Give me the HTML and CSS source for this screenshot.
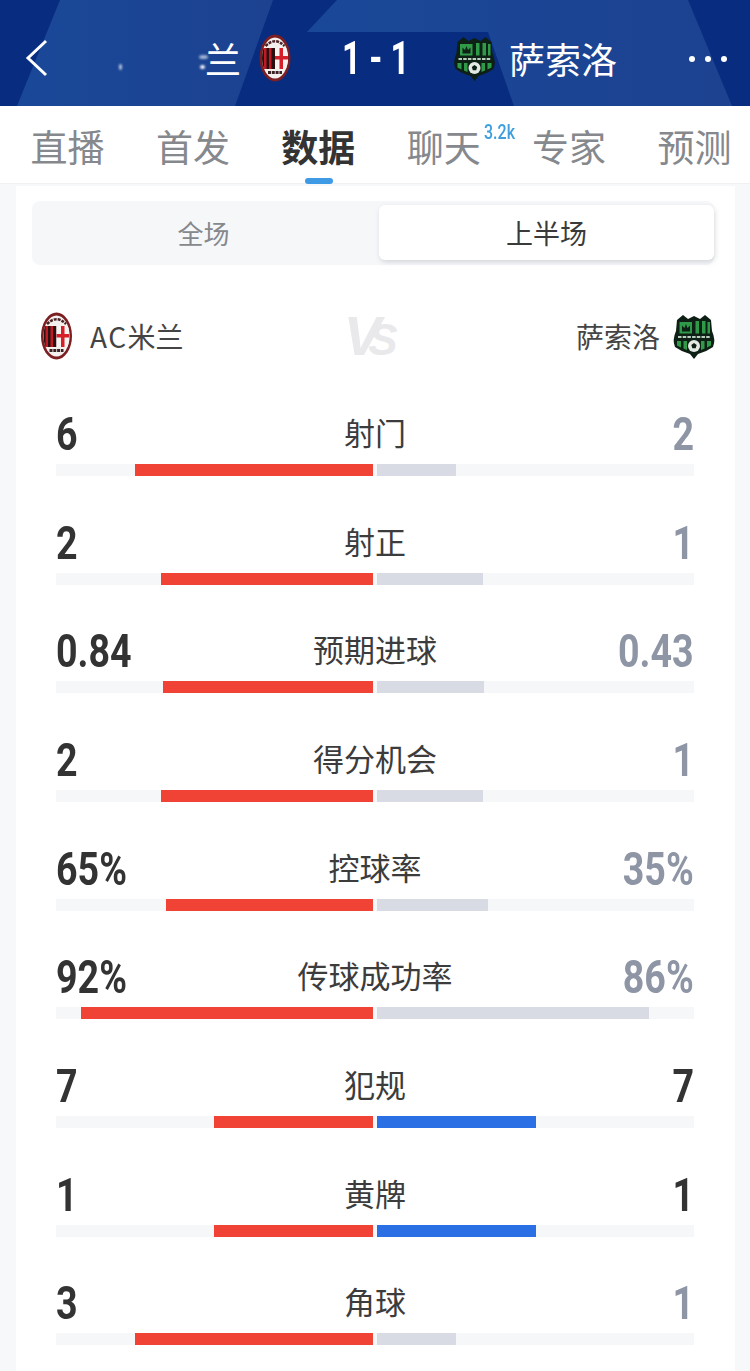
FILE: index.html
```html
<!DOCTYPE html>
<html lang="zh-CN">
<head>
<meta charset="utf-8">
<title>AC米兰 1-1 萨索洛</title>
<link rel="stylesheet" href="styles.css">
</head>
<body>
<svg class="defs" width="0" height="0" aria-hidden="true">
  <defs>
    <clipPath id="milan-inner"><ellipse cx="16" cy="24" rx="13" ry="20.500"/></clipPath>
  </defs>
  <symbol id="milan" viewBox="0 0 32 48">
    <ellipse cx="16" cy="24" rx="15.500" ry="23.500" fill="#7c1f22"/>
    <ellipse cx="16" cy="24" rx="13" ry="20.500" fill="#f4f0ee"/>
    <g clip-path="url(#milan-inner)">
      <rect x="3" y="14" width="13" height="21" fill="#2b1012"/>
      <path d="M5 14h2.500v21H5zM10 14h2.500v21H10z" fill="#c01a22"/>
      <rect x="16" y="14" width="13" height="21" fill="#f7f3f1"/>
      <rect x="20.500" y="14" width="3.500" height="21" fill="#d5202a"/>
      <rect x="16" y="22" width="13" height="3.500" fill="#d5202a"/>
    </g>
    <path d="M6.500 12 Q16 2.500 25.500 12" fill="none" stroke="#4a2426" stroke-width="2.500" stroke-dasharray="3 1"/>
    <path d="M9 38.500h14" stroke="#3a2224" stroke-width="3" stroke-dasharray="3 .8"/>
  </symbol>
  <symbol id="sassuolo" viewBox="0 0 44 46">
    <path d="M5 7 L11 2 L16 6 L22 3 L28 6 L33 2 L39 7 L40 18 Q44 27 41 34 Q34 39 26 41 L22 46 L18 41 Q10 39 3 34 Q0 27 4 18Z" fill="#0e1f15"/>
    <path d="M7.500 9h12.500v11.500H7.500z" fill="#2f9b49"/>
    <path d="M23.500 8h3.500v12.500h-3.500zM30 8h3.500v12.500H30zM35.500 9h2.500v11.500h-2.500z" fill="#2f9b49"/>
    <path d="M10 18.500v-6l2.500 2.500 1.500-4 1.500 4 2.500-2.500v6z" fill="#0e1f15"/>
    <path d="M6 24h32" stroke="#b9cfbd" stroke-width="1.800" stroke-dasharray="3.500 1.200"/>
    <path d="M5 28h4v6.500l-4-2zM11.500 28h3.500v9l-3.500-1.500zM29 28h3.500v7.500L29 37zM35 28h4v4.500l-4 2z" fill="#2f9b49"/>
    <circle cx="22" cy="33" r="6" fill="#e4ebe4"/>
    <path d="M22 30l2.700 2-1 3.200h-3.400l-1-3.200z" fill="#0e1f15"/>
  </symbol>
</svg>

<header class="match-bar">
  <svg class="match-bg" viewBox="0 0 750 106" preserveAspectRatio="none" aria-hidden="true">
    <defs>
      <linearGradient id="panel" x1="0" x2="1" y1="0" y2="0">
        <stop offset="0" stop-color="#1a4898"/>
        <stop offset="1" stop-color="#1c4290"/>
      </linearGradient>
    </defs>
    <rect width="750" height="106" fill="#082c80"/>
    <path d="M60 0H273L235 106H17Z" fill="url(#panel)"/>
    <path d="M337 0H688L732 106H514L488 32H307Z" fill="url(#panel)"/>
  </svg>
  <svg class="back" viewBox="0 0 24 38" aria-hidden="true"><path d="M21 2L3 19l18 17" fill="none" stroke="#fff" stroke-width="3"/></svg>
  <div class="team team-home">
    <span class="speck speck-a"></span><span class="speck speck-b"></span><span class="speck speck-c"></span>
    <span class="team-name">兰</span>
    <svg class="crest-milan-lg"><use href="#milan"/></svg>
  </div>
  <div class="score">1 - 1</div>
  <div class="team team-away">
    <svg class="crest-sass-lg"><use href="#sassuolo"/></svg>
    <span class="team-name">萨索洛</span>
  </div>
  <div class="more"><i></i><i></i><i></i></div>
</header>

<nav class="tabs">
  <span class="tab">直播</span>
  <span class="tab">首发</span>
  <span class="tab tab-on">数据</span>
  <span class="tab">聊天<sup class="count">3.2k</sup></span>
  <span class="tab">专家</span>
  <span class="tab">预测</span>
</nav>

<main class="sheet">
  <div class="card">
    <div class="segment">
      <span class="seg">全场</span>
      <span class="seg seg-on">上半场</span>
    </div>
    <div class="teams">
      <div class="side">
        <svg class="crest-milan"><use href="#milan"/></svg>
        <span><span class="latin">AC</span>米兰</span>
      </div>
      <div class="vs">V<span class="vs-s">S</span></div>
      <div class="side">
        <span>萨索洛</span>
        <svg class="crest-sass"><use href="#sassuolo"/></svg>
      </div>
    </div>
    <section class="stats">
      <div class="stat">
        <div class="stat-head"><b class="val">6</b><span class="label">射门</span><b class="val val-low">2</b></div>
        <div class="track"><div class="half half-l"><i class="fill red" style="width:238px"></i></div><div class="half"><i class="fill grey" style="width:79px"></i></div></div>
      </div>
      <div class="stat">
        <div class="stat-head"><b class="val">2</b><span class="label">射正</span><b class="val val-low">1</b></div>
        <div class="track"><div class="half half-l"><i class="fill red" style="width:212px"></i></div><div class="half"><i class="fill grey" style="width:106px"></i></div></div>
      </div>
      <div class="stat">
        <div class="stat-head"><b class="val">0.84</b><span class="label">预期进球</span><b class="val val-low">0.43</b></div>
        <div class="track"><div class="half half-l"><i class="fill red" style="width:210px"></i></div><div class="half"><i class="fill grey" style="width:107px"></i></div></div>
      </div>
      <div class="stat">
        <div class="stat-head"><b class="val">2</b><span class="label">得分机会</span><b class="val val-low">1</b></div>
        <div class="track"><div class="half half-l"><i class="fill red" style="width:212px"></i></div><div class="half"><i class="fill grey" style="width:106px"></i></div></div>
      </div>
      <div class="stat">
        <div class="stat-head"><b class="val">65%</b><span class="label">控球率</span><b class="val val-low">35%</b></div>
        <div class="track"><div class="half half-l"><i class="fill red" style="width:207px"></i></div><div class="half"><i class="fill grey" style="width:111px"></i></div></div>
      </div>
      <div class="stat">
        <div class="stat-head"><b class="val">92%</b><span class="label">传球成功率</span><b class="val val-low">86%</b></div>
        <div class="track"><div class="half half-l"><i class="fill red" style="width:292px"></i></div><div class="half"><i class="fill grey" style="width:272px"></i></div></div>
      </div>
      <div class="stat">
        <div class="stat-head"><b class="val">7</b><span class="label">犯规</span><b class="val">7</b></div>
        <div class="track"><div class="half half-l"><i class="fill red" style="width:159px"></i></div><div class="half"><i class="fill blue" style="width:159px"></i></div></div>
      </div>
      <div class="stat">
        <div class="stat-head"><b class="val">1</b><span class="label">黄牌</span><b class="val">1</b></div>
        <div class="track"><div class="half half-l"><i class="fill red" style="width:159px"></i></div><div class="half"><i class="fill blue" style="width:159px"></i></div></div>
      </div>
      <div class="stat">
        <div class="stat-head"><b class="val">3</b><span class="label">角球</span><b class="val val-low">1</b></div>
        <div class="track"><div class="half half-l"><i class="fill red" style="width:238px"></i></div><div class="half"><i class="fill grey" style="width:79px"></i></div></div>
      </div>
    </section>
  </div>
</main>
</body>
</html>
```

FILE: styles.css
```css
* { box-sizing: border-box; }
html, body {
  margin: 0;
  padding: 0;
  width: 750px;
  height: 1371px;
  overflow: hidden;
  background: #f7f8fa;
  font-family: "Noto Sans CJK SC", "Noto Sans", sans-serif;
}
.defs { display: block; height: 0; }

/* header */
.match-bar {
  position: relative;
  height: 106px;
  padding-top: 9px;
  display: flex;
  align-items: center;
  color: #fff;
  overflow: hidden;
}
.match-bg { position: absolute; inset: 0; width: 100%; height: 100%; }
.back { position: relative; width: 24px; height: 38px; margin-left: 25px; flex: none; }
.team { position: relative; display: flex; align-items: center; }
.team-name { font-size: 36px; line-height: 50px; }
.team-home { width: 242px; justify-content: flex-end; }
.crest-milan-lg { width: 32px; height: 48px; margin-left: 18px; flex: none; }
.crest-sass-lg { width: 45px; height: 46px; margin-right: 12px; flex: none; }
.speck { position: absolute; background: #fff; border-radius: 50%; filter: blur(1px); }
.speck-a { left: 150px; top: 22px; width: 9px; height: 4px; opacity: .6; }
.speck-b { left: 151px; top: 32px; width: 5px; height: 4px; }
.speck-c { left: 70px; top: 31px; width: 3px; height: 6px; opacity: .7; }
.score {
  position: relative;
  width: 116px;
  margin-left: 51px;
  font-family: "Roboto", sans-serif;
  font-weight: 700;
  font-size: 46px;
  line-height: 50px;
  white-space: nowrap;
  transform: scaleX(.72);
  transform-origin: left center;
}
.team-away { margin-left: -6px; }
.more { position: absolute; right: 23px; top: 56px; display: flex; gap: 10px; }
.more i { width: 6px; height: 6px; border-radius: 50%; background: #fff; }

/* tabs */
.tabs {
  height: 78px;
  padding: 12px 18px 0 30px;
  display: flex;
  justify-content: space-between;
  align-items: flex-start;
  background: #fff;
  border-bottom: 1px solid #f0f1f3;
}
.tab {
  position: relative;
  width: 75px;
  text-align: center;
  font-size: 37px;
  line-height: 56px;
  color: #85888c;
  white-space: nowrap;
}
.tab-on { color: #333; font-weight: 700; }
.tab-on::after {
  content: "";
  position: absolute;
  left: 24px;
  top: 60px;
  width: 28px;
  height: 6px;
  border-radius: 3px;
  background: #3f9ae6;
}
.count {
  position: absolute;
  left: 78px;
  top: 4px;
  font-family: "Roboto", sans-serif;
  font-size: 20px;
  font-weight: 500;
  line-height: 20px;
  color: #3f9fdc;
  transform: scaleX(.8);
  transform-origin: left center;
}

/* card */
.sheet { padding: 2px 15px 0 16px; }
.card { height: 1190px; background: #fff; padding: 15px 0 0 16px; overflow: hidden; }
.segment {
  width: 682px;
  height: 64px;
  padding: 4px 0;
  display: flex;
  gap: 4px;
  background: #f6f7f9;
  border-radius: 8px;
}
.seg {
  width: 343px;
  text-align: center;
  font-size: 26px;
  line-height: 56px;
  color: #85888c;
}
.seg-on {
  width: 335px;
  height: 55px;
  background: #fff;
  color: #3a3a3a;
  font-size: 27px;
  border-radius: 6px;
  box-shadow: 1px 2px 5px rgba(120, 125, 140, .28);
}
.teams {
  height: 144px;
  width: 684px;
  padding: 47px 0 0 8px;
  display: flex;
  justify-content: space-between;
  align-items: flex-start;
}
.side {
  display: flex;
  align-items: center;
  gap: 17px;
  height: 48px;
  font-size: 28px;
  line-height: 44px;
  color: #444;
}
.latin { letter-spacing: 1.5px; }
.crest-milan { width: 33px; height: 48px; flex: none; }
.crest-sass { width: 44px; height: 46px; flex: none; margin-left: -5px; }
.vs {
  width: 60px;
  margin-left: -12px;
  margin-top: -6px;
  font-family: "Liberation Sans", sans-serif;
  font-weight: 700;
  font-style: italic;
  font-size: 56px;
  line-height: 60px;
  color: #e9e9ec;
  white-space: nowrap;
}
.vs-s { font-size: 44px; margin-left: -13px; }

/* stats */
.stats { margin-left: 24px; width: 638px; }
.stat { height: 108.670px; }
.stat-head {
  position: relative;
  height: 50px;
  margin-bottom: 5px;
  display: flex;
  justify-content: space-between;
  align-items: center;
}
.val {
  display: block;
  font-family: "Roboto", sans-serif;
  font-weight: 700;
  font-size: 47px;
  line-height: 50px;
  color: #333;
  transform: scaleX(.8);
  transform-origin: left center;
}
.val:last-child { transform-origin: right center; }
.val-low { color: #8e95a5; }
.label {
  position: absolute;
  left: 0;
  right: 0;
  top: -2px;
  text-align: center;
  font-size: 31px;
  line-height: 50px;
  color: #3c3c3c;
}
.track { display: flex; gap: 4px; height: 12px; background: #f6f7f9; }
.half { flex: 1; display: flex; }
.half-l { justify-content: flex-end; }
.fill { display: block; height: 12px; }
.red { background: #f04335; }
.grey { background: #d9dbe4; }
.blue { background: #2a6fe4; }
```
